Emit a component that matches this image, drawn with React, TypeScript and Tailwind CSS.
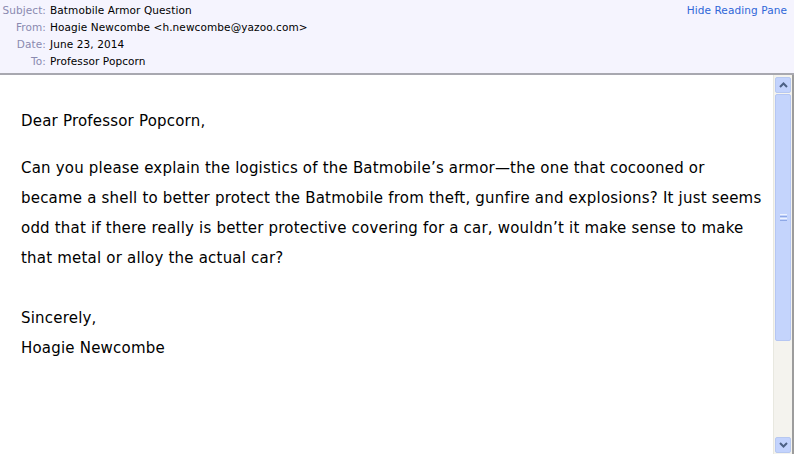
import React from "react";

const labelCls = "w-[50px] text-right text-[#8a8ab0] pr-[4px]";
const valueCls = "text-black";

function Row({ label, value }: { label: string; value: string }) {
  return (
    <div className="flex h-[17px] items-center">
      <span className={labelCls}>{label}</span>
      <span className={valueCls}>{value}</span>
    </div>
  );
}

function ScrollBar() {
  return (
    <div className="flex w-[19px] shrink-0 flex-col border-l border-[#e8e8e0] bg-[#f4f3ee] pl-[1px] pt-[2px]">
      <div className="flex h-[16px] w-[16px] items-center justify-center rounded-[2px] border border-[#b7c8f0] bg-[#c3d3fd]">
        <svg width="9" height="6" viewBox="0 0 9 6">
          <path d="M1 5 L4.5 1.5 L8 5" stroke="#4d6185" strokeWidth="2" fill="none" />
        </svg>
      </div>
      <div className="mt-[1px] flex h-[247px] w-[16px] items-center justify-center rounded-[2px] border border-[#b5c6f3] bg-[#c4d4fc]">
        <div className="flex flex-col gap-[1px]">
          <div className="h-[1px] w-[7px] bg-[#eef3fe]" />
          <div className="h-[1px] w-[7px] bg-[#8ea8e6]" />
          <div className="h-[1px] w-[7px] bg-[#eef3fe]" />
          <div className="h-[1px] w-[7px] bg-[#8ea8e6]" />
        </div>
      </div>
      <div className="flex-1" />
      <div className="mb-[1px] flex h-[16px] w-[16px] items-center justify-center rounded-[2px] border border-[#b7c8f0] bg-[#c3d3fd]">
        <svg width="9" height="6" viewBox="0 0 9 6">
          <path d="M1 1 L4.5 4.5 L8 1" stroke="#4d6185" strokeWidth="2" fill="none" />
        </svg>
      </div>
    </div>
  );
}

export default function App() {
  const lines = [
    "Can you please explain the logistics of the Batmobile\u2019s armor\u2014the one that cocooned or",
    "became a shell to better protect the Batmobile from theft, gunfire and explosions? It just seems",
    "odd that if there really is better protective covering for a car, wouldn\u2019t it make sense to make",
    "that metal or alloy the actual car?",
  ];
  return (
    <div className="flex h-[454px] w-[794px] flex-col overflow-hidden bg-white font-['DejaVu_Sans',sans-serif]">
      {/* Header */}
      <div className="relative h-[75px] shrink-0 border-b-2 border-[#a8a8b0] bg-[#f5f4fe] pt-[2px] text-[10.5px] tracking-[0.1px]">
        <Row label="Subject:" value="Batmobile Armor Question" />
        <Row label="From:" value="Hoagie Newcombe <h.newcombe@yazoo.com>" />
        <Row label="Date:" value="June 23, 2014" />
        <Row label="To:" value="Professor Popcorn" />
        <a className="absolute right-[7px] top-[3px] text-[#2f67d8]">Hide Reading Pane</a>
      </div>
      {/* Body */}
      <div className="flex min-h-0 flex-1 border-r-2 border-[#9c9c9c]">
        <div className="flex-1 pl-[21px] pt-[31px] text-[15px] leading-[30px] tracking-[0.2px] text-black">
          <div>Dear Professor Popcorn,</div>
          <div className="mt-[17px]">
            {lines.map((l) => (
              <div key={l} className="whitespace-nowrap">{l}</div>
            ))}
          </div>
          <div className="mt-[30px]">Sincerely,</div>
          <div>Hoagie Newcombe</div>
        </div>
        <ScrollBar />
      </div>
    </div>
  );
}
